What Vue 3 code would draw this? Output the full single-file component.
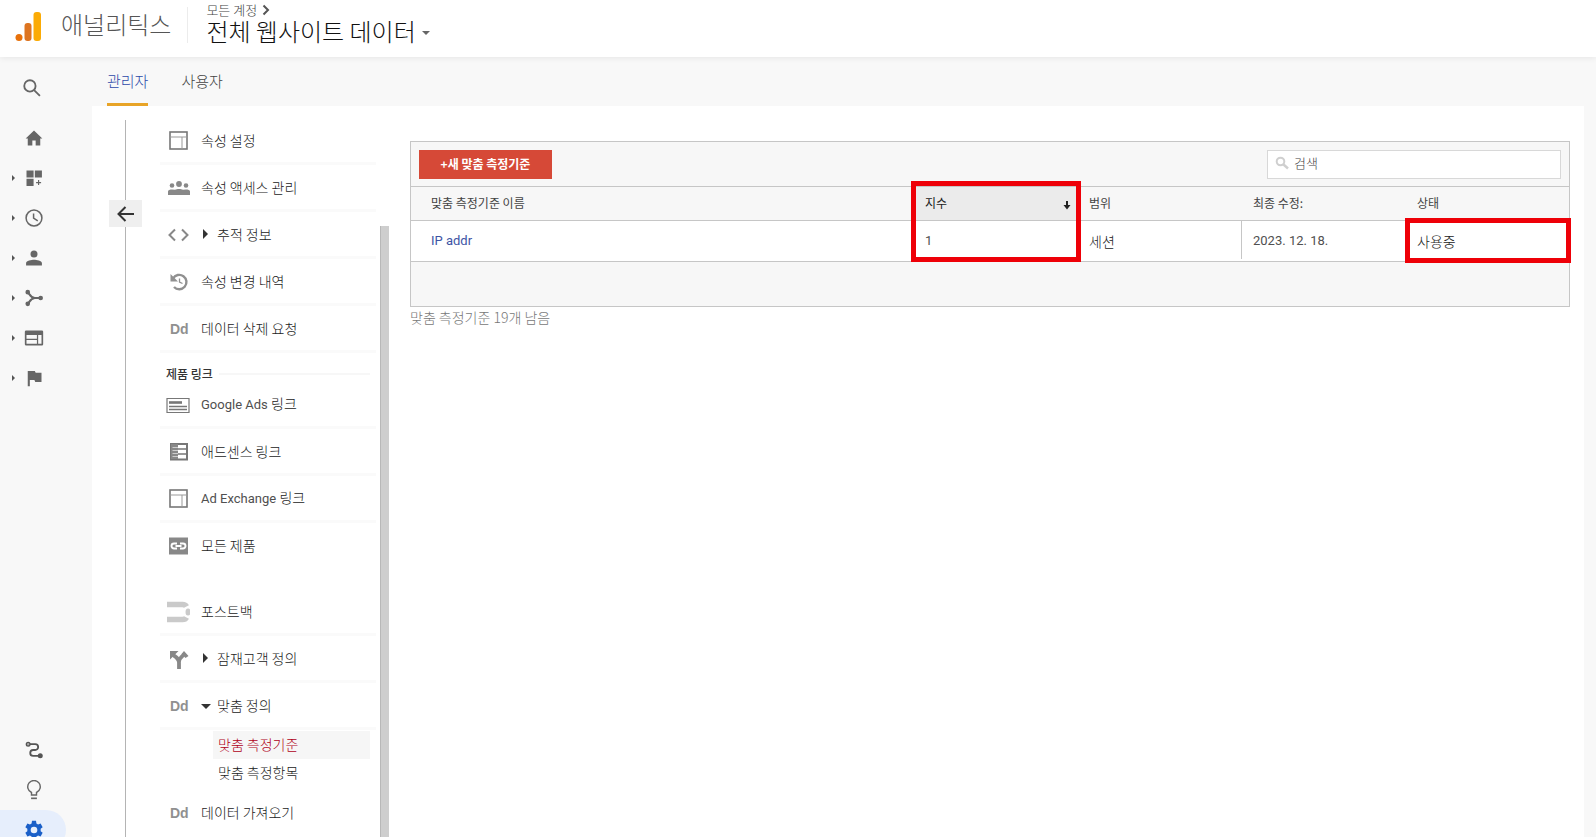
<script setup>
import { ref } from 'vue'

const query = ref('')

const navTop = [
  { id: 'home', label: '홈', caret: false },
  { id: 'custom', label: '맞춤설정', caret: true },
  { id: 'clock', label: '실시간', caret: true },
  { id: 'person', label: '잠재고객', caret: true },
  { id: 'acquire', label: '획득', caret: true },
  { id: 'behavior', label: '행동', caret: true },
  { id: 'flag', label: '전환', caret: true },
]
const navBottom = [
  { id: 'path', label: '기여 분석' },
  { id: 'bulb', label: '탐색' },
  { id: 'gear', label: '관리', active: true },
]

const groups = [
  {
    items: [
      { icon: 'panel', text: '속성 설정' },
      { icon: 'people', text: '속성 액세스 관리' },
      { icon: 'code', text: '추적 정보', arrow: 'right' },
      { icon: 'history', text: '속성 변경 내역' },
      { icon: 'dd', text: '데이터 삭제 요청' },
    ],
  },
  {
    title: '제품 링크',
    items: [
      { icon: 'ads', latin: 'Google Ads', text: '링크' },
      { icon: 'adsense', text: '애드센스 링크' },
      { icon: 'panel', latin: 'Ad Exchange', text: '링크' },
      { icon: 'link', text: '모든 제품' },
    ],
  },
  {
    items: [
      { icon: 'postback', text: '포스트백' },
      { icon: 'split', text: '잠재고객 정의', arrow: 'right' },
      {
        icon: 'dd',
        text: '맞춤 정의',
        arrow: 'down',
        children: [
          { text: '맞춤 측정기준', active: true },
          { text: '맞춤 측정항목' },
        ],
      },
      { icon: 'dd', text: '데이터 가져오기' },
    ],
  },
]
</script>

<template>
  <div class="app">
    <header class="topbar">
      <svg class="logo" viewBox="0 0 28 30" aria-hidden="true">
        <rect x="18.500" y="0" width="7.500" height="29" rx="3" fill="#fbab05" />
        <rect x="9.500" y="11" width="7" height="18" rx="3" fill="#dd7420" />
        <circle cx="4" cy="25.500" r="3.500" fill="#e8710a" />
      </svg>
      <span class="brand">애널리틱스</span>
      <div class="account">
        <a class="crumb" href="#">모든 계정
          <svg viewBox="0 0 8 12" aria-hidden="true"><path d="M1.500 1.500 6 6l-4.500 4.500" /></svg>
        </a>
        <button class="view" type="button">전체 웹사이트 데이터<i class="tri-down"></i></button>
      </div>
    </header>

    <div class="body">
      <nav class="rail">
        <a class="rail-item search-item" href="#" aria-label="검색">
          <svg class="ri" viewBox="0 0 24 24" fill="none" stroke="#666" stroke-width="2.200">
            <circle cx="9.500" cy="9.500" r="6.800" /><path d="m14.500 14.500 7 7" />
          </svg>
        </a>
        <a v-for="n in navTop" :key="n.id" class="rail-item" href="#" :aria-label="n.label">
          <i v-if="n.caret" class="caret"></i>
          <svg class="ri" viewBox="0 0 24 24" fill="#666">
            <path v-if="n.id === 'home'" d="M10 21v-6h4v6h5.500v-8.500H22L12 3 2 12.500h2.500V21z" />
            <path v-else-if="n.id === 'custom'" d="M3 3h8.500v8.500H3zM13 3h8.500v8.500H13zM3 13h8.500v8.500H3zM16.800 14.500h1.400v2.300h2.300v1.400h-2.300v2.300h-1.400v-2.300h-2.300v-1.400h2.300z" />
            <g v-else-if="n.id === 'clock'" fill="none" stroke="#666" stroke-width="1.800">
              <circle cx="12" cy="12" r="9.500" /><path d="M11.500 6.500V12l5 3.500" />
            </g>
            <path v-else-if="n.id === 'person'" d="M12 11.500a4.200 4.200 0 1 0 0-8.400 4.200 4.200 0 0 0 0 8.400zm0 2.500c-3 0-9.500 1.300-9.500 4v3h19v-3c0-2.700-6.500-4-9.500-4z" />
            <g v-else-if="n.id === 'acquire'" stroke="#666" stroke-width="2.400">
              <path d="M4.500 5c2 2 3.500 7 8.500 7M4.500 19c2-2 3.500-7 8.500-7h7" fill="none" />
              <circle cx="4.500" cy="5" r="1.600" /><circle cx="4.500" cy="19" r="1.600" /><circle cx="20" cy="12" r="1.600" />
            </g>
            <path v-else-if="n.id === 'behavior'" fill-rule="evenodd" d="M2.500 3h19A1.500 1.500 0 0 1 23 4.500v15a1.500 1.500 0 0 1-1.500 1.500h-19A1.500 1.500 0 0 1 1 19.500v-15A1.500 1.500 0 0 1 2.500 3zM3 8.500v4.500h12.500V8.500zM3 14.500V19h12.500v-4.500zM17 8.500V19h4V8.500z" />
            <path v-else d="M4.500 3.500h8.500l1 2.200h7v11h-7.500l-1-2.200H7V22H4.500z" />
          </svg>
        </a>
        <div class="rail-bottom">
          <a v-for="n in navBottom" :key="n.id" class="rail-item" :class="{ active: n.active }" href="#" :aria-label="n.label">
            <svg class="ri" viewBox="0 0 24 24" fill="#666">
              <g v-if="n.id === 'path'">
                <path d="M6 5h7.500a3.500 3.500 0 0 1 0 7H11a3.500 3.500 0 0 0 0 7h8" fill="none" stroke="#555" stroke-width="2.200" />
                <circle cx="5" cy="5" r="2.200" fill="#aaa" stroke="#555" stroke-width="1.600" />
                <circle cx="19.500" cy="19" r="3" fill="#555" />
              </g>
              <g v-else-if="n.id === 'bulb'" fill="none" stroke="#666" stroke-width="1.700">
                <path d="M9 18v-3a7.500 7.500 0 1 1 6 0v3z" /><path d="M8.500 22h7" stroke-width="2" />
              </g>
              <path v-else fill="#1a5fc8" fill-rule="evenodd" d="m9.600 1-.5 3.100-2 1.200-3-1.100-2.500 4.400 2.400 2v2.800l-2.400 2 2.500 4.400 3-1.100 2 1.200.5 3.100h4.800l.5-3.100 2-1.200 3 1.100 2.500-4.400-2.400-2v-2.800l2.400-2-2.500-4.400-3 1.100-2-1.200-.5-3.100zM12 8a4 4 0 1 1 0 8 4 4 0 0 1 0-8z" />
            </svg>
          </a>
        </div>
      </nav>

      <main class="main">
        <div class="tabs">
          <a class="tab on" href="#">관리자</a>
          <a class="tab" href="#">사용자</a>
        </div>

        <div class="content">
          <div class="spine">
            <button class="back" type="button" aria-label="뒤로">
              <svg viewBox="0 0 18 16" fill="none" stroke="#333" stroke-width="2"><path d="M17 8H2M8.500 1 1.500 8l7 7" /></svg>
            </button>
          </div>

          <nav class="menu">
            <section v-for="(g, gi) in groups" :key="gi" class="group">
              <h2 v-if="g.title" class="group-title">{{ g.title }}</h2>
              <template v-for="it in g.items" :key="it.latin || it.text">
                <a class="row" href="#">
                  <span class="mi">
                    <span v-if="it.icon === 'dd'" class="dd">Dd</span>
                    <svg v-else viewBox="0 0 24 24" fill="none" stroke="#777" stroke-width="1.600">
                      <g v-if="it.icon === 'panel'"><rect x="4" y="4" width="17" height="17" /><path d="M4 9h17M16 9v12" stroke-width="1" stroke="#999" /></g>
                      <g v-else-if="it.icon === 'people'" fill="#888" stroke="none">
                        <circle cx="6" cy="10.500" r="2.300" /><circle cx="13" cy="9" r="2.900" /><circle cx="20" cy="10.500" r="2.300" />
                        <path d="M2 20v-3.500C2 15 4 14.500 6 14.500l3 .3c1-.6 2.500-.8 4-.8s3 .2 4 .8l3-.3c2 0 4 .5 4 2V20z" />
                      </g>
                      <path v-else-if="it.icon === 'code'" d="M9 7.500 3.500 13 9 18.500M16 7.500l5.500 5.500-5.500 5.500" stroke="#888" stroke-width="2" />
                      <g v-else-if="it.icon === 'history'" stroke="#909090" stroke-width="2.400">
                        <path d="M7 9.500A7.200 7.200 0 1 1 8 18" /><path d="M4.500 5v7.500H12z" fill="#909090" stroke="none" /><path d="M13.500 9.500V13l3 1.500" stroke-width="1.300" />
                      </g>
                      <g v-else-if="it.icon === 'ads'"><path d="M1 6.500h22v14H1z" stroke-width="1.200" /><path d="M3 10.500h13" stroke-width="2.600" /><path d="M3 14.500h18M3 17.500h18" stroke-width="1.300" /></g>
                      <g v-else-if="it.icon === 'adsense'">
                        <path d="M5 5h16v15.500H5z" stroke-width="2" /><path d="M5 5h7v15H5z" fill="#888" stroke="none" /><path d="M12 10h9M12 15h9" /><path d="M6.500 8.500H12M6.500 11.500H12M6.500 14.500H12M6.500 17.500H12" stroke="#ccc" stroke-width="1" />
                      </g>
                      <g v-else-if="it.icon === 'link'"><path d="M3 4.500h19v17H3z" fill="#888" stroke="none" /><path d="M11 10.500H8a2.500 2.500 0 0 0 0 5h3M14 10.500h3a2.500 2.500 0 0 1 0 5h-3M9.500 13h6" stroke="#fff" stroke-width="1.900" /></g>
                      <g v-else-if="it.icon === 'postback'" stroke="#cacaca" stroke-width="5.500"><path d="M1 5.500h15.500q3 0 4 2M1 20.500h15.500q3 0 4-2" /><ellipse cx="22" cy="13" rx="2.500" ry="3.500" fill="#cacaca" stroke="none" /></g>
                      <g v-else stroke="#888" stroke-width="3.800"><path d="M6.500 8.500c4 3 6.500 4 6.500 8V23M13 16c0-4 3-5.500 6-8.500" /><path d="M4 5h8.500L4 13.500zM18 5l4.500 5-3 2-4-4z" fill="#888" stroke="none" /></g>
                    </svg>
                  </span>
                  <i v-if="it.arrow" :class="['arrow', it.arrow]"></i>
                  <span class="label"><span v-if="it.latin" class="latin">{{ it.latin }}&nbsp;</span>{{ it.text }}</span>
                </a>
                <div v-if="it.children" class="subs">
                  <a v-for="c in it.children" :key="c.text" href="#" class="sub" :class="{ on: c.active }">{{ c.text }}</a>
                </div>
              </template>
            </section>
          </nav>

          <div class="scroll"></div>

          <section class="report">
            <div class="card">
              <div class="toolbar">
                <button class="create" type="button">+새 맞춤 측정기준</button>
                <label class="search">
                  <svg viewBox="0 0 14 14" fill="none" stroke="#cfcfcf"><circle cx="5.500" cy="5.500" r="3.800" stroke-width="2" /><path d="m8.500 8.500 4.500 4" stroke-width="2.500" /></svg>
                  <input v-model="query" type="text" placeholder="검색" aria-label="검색" />
                </label>
              </div>
              <div class="table-wrap">
                <table>
                  <colgroup><col /><col class="c" /><col class="c" /><col class="c" /><col class="c" /></colgroup>
                  <thead>
                    <tr>
                      <th>맞춤 측정기준 이름</th>
                      <th class="sorted"><span>지수</span>
                        <svg viewBox="0 0 8 10" aria-hidden="true"><path d="M3 1h2v4h2.500L4 9.500.5 5H3z" fill="#222" /></svg>
                      </th>
                      <th>범위</th>
                      <th>최종 수정:</th>
                      <th>상태</th>
                    </tr>
                  </thead>
                  <tbody>
                    <tr>
                      <td class="latin"><a href="#">IP addr</a></td>
                      <td class="latin">1</td>
                      <td>세션</td>
                      <td class="latin date">2023. 12. 18.</td>
                      <td>사용중</td>
                    </tr>
                  </tbody>
                </table>
                <div class="mark mark-index"></div>
                <div class="mark mark-state"></div>
              </div>
              <div class="card-foot"></div>
            </div>
            <p class="remain">맞춤 측정기준 19개 남음</p>
          </section>
        </div>
      </main>
    </div>
  </div>
</template>

<style>
body {
  margin: 0;
}
</style>

<style scoped>
* {
  box-sizing: border-box;
}
.app {
  height: 100vh;
  display: flex;
  flex-direction: column;
  overflow: hidden;
  background: #fff;
  color: #222;
  font-family: "Noto Sans CJK KR", sans-serif;
  font-size: 14px;
  font-weight: 300;
  line-height: 20px;
}
a {
  color: inherit;
  text-decoration: none;
}
button {
  font-family: inherit;
  border: 0;
  padding: 0;
  cursor: pointer;
}
.latin {
  font-family: Roboto, "Noto Sans CJK KR", sans-serif;
  font-size: 13px;
  font-weight: 400;
  color: #505050;
}

.topbar {
  flex: none;
  height: 57px;
  display: flex;
  align-items: center;
  padding: 0 15px;
  background: #fff;
  box-shadow: 0 1px 6px rgba(0, 0, 0, 0.08);
  position: relative;
}
.logo {
  width: 28px;
  height: 30px;
  margin-bottom: 4px;
}
.brand {
  margin-left: 18px;
  margin-bottom: 10px;
  font-size: 24px;
  line-height: 32px;
  color: #555;
}
.account {
  margin-left: 16px;
  padding: 0 0 4px 18px;
  height: 36px;
  margin-bottom: 8px;
  border-left: 1px solid #ececec;
  display: flex;
  flex-direction: column;
  justify-content: center;
  align-items: flex-start;
  gap: 1px;
}
.crumb {
  font-size: 13px;
  line-height: 16px;
  color: #444;
  display: flex;
  align-items: center;
  gap: 5px;
}
.crumb svg {
  width: 8px;
  height: 12px;
  fill: none;
  stroke: #555;
  stroke-width: 2;
}
.view {
  background: none;
  display: flex;
  align-items: center;
  gap: 6px;
  font-size: 24px;
  font-weight: 300;
  line-height: 24px;
  color: #111;
}
.tri-down {
  border: 4px solid transparent;
  border-top-color: #666;
  border-bottom: 0;
  margin-top: 4px;
}

.body {
  flex: 1;
  min-height: 0;
  display: flex;
  background: #f8f8f8;
}
.rail {
  width: 92px;
  flex: none;
  display: flex;
  flex-direction: column;
  padding-top: 11px;
}
.rail-item {
  width: 66px;
  height: 40px;
  flex: none;
  display: flex;
  align-items: center;
  justify-content: flex-end;
  padding-right: 22px;
}
.search-item {
  margin-bottom: 10px;
  padding-right: 24px;
}
.ri {
  width: 20px;
  height: 20px;
}
.caret {
  border: 3px solid transparent;
  border-left-color: #555;
  border-right: 0;
  margin-right: 9px;
}
.rail-bottom {
  margin-top: auto;
  margin-bottom: -13px;
}
.active {
  background: #e6eefc;
  border-radius: 0 20px 20px 0;
}

.main {
  flex: 1;
  min-width: 0;
  display: flex;
  flex-direction: column;
}
.tabs {
  flex: none;
  height: 49px;
  display: flex;
  gap: 33px;
  padding-left: 15px;
}
.tab {
  font-size: 15px;
  line-height: 20px;
  padding-top: 14px;
  color: #444;
}
.tab.on {
  color: #2c48a8;
  border-bottom: 3px solid #e8a427;
}
.content {
  flex: 1;
  min-height: 0;
  display: flex;
  margin-right: 12px;
  padding-top: 12px;
  background: #fff;
}
.spine {
  width: 33px;
  flex: none;
  margin-left: 17px;
  margin-top: 2px;
  padding-top: 80px;
  background: linear-gradient(#b4b4b4, #b4b4b4) 16px 0 / 1px 100% no-repeat;
}
.back {
  width: 33px;
  height: 27px;
  background: #efefef;
  display: flex;
  align-items: center;
  justify-content: center;
}
.back svg {
  width: 18px;
  height: 16px;
}

.menu {
  width: 216px;
  flex: none;
  margin-left: 18px;
}
.group + .group:last-child {
  margin-top: 19px;
}
.group-title {
  display: flex;
  align-items: center;
  gap: 6px;
  margin: 0;
  padding: 13px 6px 0;
  height: 29px;
  font-size: 12px;
  line-height: 16px;
  font-weight: 500;
  color: #333;
}
.group-title::after {
  content: "";
  flex: 1;
  height: 2px;
  background: #f7f7f7;
}
.row {
  height: 47px;
  display: flex;
  align-items: center;
  border-bottom: 3px solid #fafafa;
  padding-left: 6px;
}
.group:nth-child(2) .row:last-child,
.group:last-child .row:last-child {
  border-bottom-color: transparent;
}
.mi {
  width: 24px;
  height: 24px;
  flex: none;
  margin-right: 11px;
}
.mi svg {
  width: 24px;
  height: 24px;
  display: block;
}
.dd {
  display: block;
  padding-left: 4px;
  font: 700 14px/26px "Liberation Sans", sans-serif;
  color: #909090;
}
.arrow {
  width: 16px;
  flex: none;
}
.arrow::before {
  content: "";
  display: block;
  width: 0;
  border: 5px solid transparent;
}
.right::before {
  border-left-color: #333;
  border-right: 0;
  margin-left: 2px;
}
.down::before {
  border-top-color: #333;
  border-bottom: 0;
  margin-top: 3px;
}
.subs {
  padding: 1px 6px 3px 53px;
}
.sub {
  display: block;
  height: 28px;
  line-height: 26px;
  padding-left: 5px;
}
.sub.on {
  background: #f6f6f6;
  color: #b00018;
}
.scroll {
  width: 9px;
  flex: none;
  margin: 108px 0 0 4px;
  background: #cecece;
  border-left: 1px solid #b8b8b8;
}

.report {
  flex: 1;
  min-width: 0;
  padding: 23px 14px 0 21px;
}
.card {
  border: 1px solid #c6c6c6;
  background: #f7f7f7;
}
.toolbar {
  height: 44px;
  display: flex;
  align-items: center;
  justify-content: space-between;
  padding: 0 8px;
}
.create {
  width: 133px;
  height: 29px;
  background: #d64937;
  color: #fff;
  font-size: 12px;
  font-weight: 700;
  line-height: 16px;
}
.search {
  width: 294px;
  height: 29px;
  display: flex;
  align-items: center;
  gap: 5px;
  padding: 0 0 2px 7px;
  background: #fff;
  border: 1px solid #d8d8d8;
}
.search svg {
  width: 14px;
  height: 14px;
}
.search input {
  flex: 1;
  min-width: 0;
  border: 0;
  outline: 0;
  padding: 0;
  background: none;
  font: inherit;
  font-size: 13px;
}
.search input::placeholder {
  color: #444;
  opacity: 1;
}
.table-wrap {
  position: relative;
}
table {
  width: 100%;
  table-layout: fixed;
  border-collapse: separate;
  border-spacing: 0;
}
.c {
  width: 164px;
}
th,
td {
  text-align: left;
  padding: 0 12px;
  border-top: 1px solid #c6c6c6;
}
th:first-child,
td:first-child {
  padding-left: 20px;
}
th {
  height: 34px;
  padding-bottom: 2px;
  font-size: 12px;
  line-height: 16px;
  font-weight: 400;
  color: #444;
}
td {
  height: 41px;
  padding-bottom: 1px;
  background: #fff;
}
td a {
  color: #3d55a5;
}
.sorted {
  background: #ebebeb;
  color: #222;
}
.sorted svg {
  float: right;
  width: 8px;
  height: 10px;
  margin-top: 5px;
  margin-right: -6px;
}
.date {
  background: linear-gradient(#c6c6c6, #c6c6c6) 0 0 / 1px 38px no-repeat #fff;
}
.mark {
  position: absolute;
  border: 5px solid #ee0008;
  pointer-events: none;
}
.mark-index {
  top: -5px;
  bottom: -1px;
  right: 488px;
  width: 170px;
}
.mark-state {
  top: 32px;
  bottom: -2px;
  right: -2px;
  width: 166px;
}
.card-foot {
  height: 45px;
  border-top: 1px solid #c6c6c6;
}
.remain {
  margin: 0;
  color: #777;
}
</style>
